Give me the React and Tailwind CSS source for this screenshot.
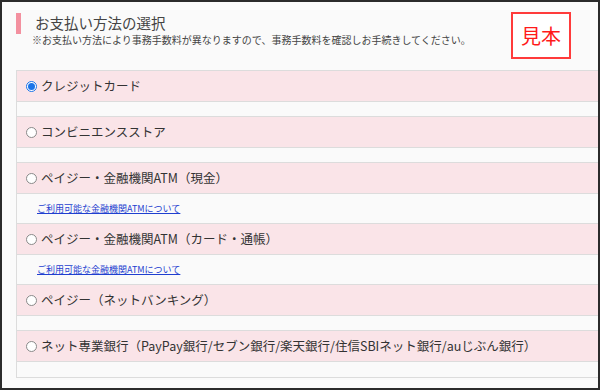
import React from "react";

const methods = [
  { label: "クレジットカード", checked: true },
  { label: "コンビニエンスストア" },
  { label: "ペイジー・金融機関ATM（現金）", link: true },
  { label: "ペイジー・金融機関ATM（カード・通帳）", link: true },
  { label: "ペイジー（ネットバンキング）" },
  { label: "ネット専業銀行（PayPay銀行/セブン銀行/楽天銀行/住信SBIネット銀行/auじぶん銀行）" },
];

function Radio({ checked }) {
  if (checked) {
    return (
      <span className="w-[11px] h-[11px] rounded-full border border-[#1a73e8] bg-white flex items-center justify-center shrink-0">
        <span className="w-[7px] h-[7px] rounded-full bg-[#1a73e8]" />
      </span>
    );
  }
  return <span className="w-[11px] h-[11px] rounded-full border border-[#8a8a8a] bg-white shrink-0" />;
}

export default function App() {
  return (
    <div
      className="w-[600px] h-[390px] border-2 border-[#2b2b2b] bg-[#fafafa] overflow-hidden text-[#333]"
      style={{ fontFamily: '"Noto Sans CJK JP", "Noto Sans", sans-serif' }}
    >
      {/* header */}
      <div className="h-[68px] flex items-start justify-between">
        <div className="flex items-start pl-[14px] pt-[11px]">
          <div className="w-[5px] h-[21px] bg-[#f3909f]" />
          <div className="ml-[11px]">
            <div className="pl-[3px] text-[14.5px] leading-[20px] text-[#444]">お支払い方法の選択</div>
            <div className="text-[10px] leading-[14px] text-[#444]">
              ※お支払い方法により事務手数料が異なりますので、事務手数料を確認しお手続きしてください。
            </div>
          </div>
        </div>
        <div className="mt-[10px] mr-[27px] w-[60px] h-[47px] border-2 border-[#ff3b3b] bg-white flex items-center justify-center text-[20px] text-[#ff1a1a] leading-none">
          見本
        </div>
      </div>

      {/* list */}
      <div className="ml-[14px] border-l border-t border-b border-[#dcdcdc]">
        {methods.map((m, i) => (
          <div key={i}>
            <div className="h-[31px] bg-[#fae4e8] border-b border-[#dcdcdc] flex items-center pl-[9px] gap-[4px]">
              <Radio checked={m.checked} />
              <span className="text-[12.5px] leading-none whitespace-nowrap">{m.label}</span>
            </div>
            <div
              className={
                (m.link ? "h-[30px] " : "h-[15px] ") +
                "bg-[#fafafa] flex items-center pl-[20px] " +
                (i < methods.length - 1 ? "border-b border-[#dcdcdc]" : "")
              }
            >
              {m.link && (
                <a href="#" className="text-[9px] leading-none text-[#1f3fd0] underline">
                  ご利用可能な金融機関ATMについて
                </a>
              )}
            </div>
          </div>
        ))}
      </div>
    </div>
  );
}
